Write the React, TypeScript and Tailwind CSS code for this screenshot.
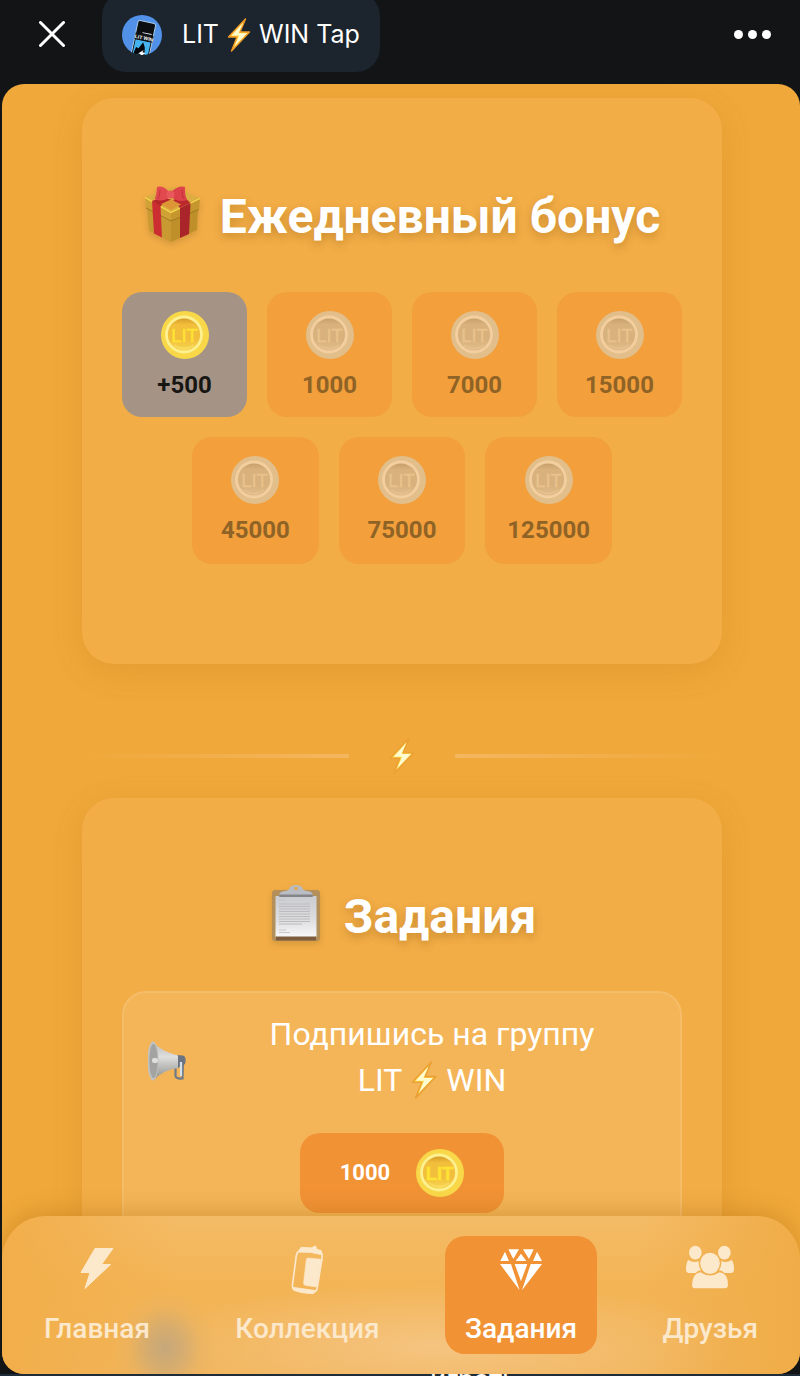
import type { ReactNode } from 'react';

type Day = { label: string; active?: boolean };

const firstRow: Day[] = [
  { label: '+500', active: true },
  { label: '1000' },
  { label: '7000' },
  { label: '15000' },
];
const secondRow: Day[] = [{ label: '45000' }, { label: '75000' }, { label: '125000' }];

function Coin({ faded = false }: { faded?: boolean }) {
  const id = faded ? 'coin-faded' : 'coin-gold';
  const c = faded
    ? { outer: '#e2be8b', ring: '#f3cf9f', top: '#c49c66', mid: '#d8b17d', low: '#e3bf8c', text: '#e9c28c' }
    : { outer: '#f8d848', ring: '#fdf090', top: '#cf9424', mid: '#f2bf3c', low: '#f9db55', text: '#ffe334' };
  return (
    <svg viewBox="0 0 48 48" className="size-12 shrink-0" aria-hidden="true">
      <defs>
        <linearGradient id={id} x1="0" y1="0" x2="0" y2="1">
          <stop offset="0" stopColor={c.top} />
          <stop offset="0.22" stopColor={c.mid} />
          <stop offset="0.65" stopColor={c.mid} />
          <stop offset="1" stopColor={c.low} />
        </linearGradient>
      </defs>
      <circle cx="24" cy="24" r="24" fill={c.outer} />
      <circle cx="23" cy="23.5" r="17.5" fill={`url(#${id})`} stroke={c.ring} strokeWidth="2.8" />
      <path d="M13 34 Q23 41 33 34" fill="none" stroke={c.ring} strokeWidth="1" opacity="0.5" />
      <text
        x="23.5"
        y="31"
        textAnchor="middle"
        fontSize="18.5"
        fill={c.text}
        stroke={c.text}
        strokeWidth="0.4"
        fontFamily="Liberation Sans, sans-serif"
      >
        LIT
      </text>
    </svg>
  );
}

function Bolt({ className, soft = false }: { className: string; soft?: boolean }) {
  return (
    <svg viewBox="0 0 24 34" className={className} aria-hidden="true">
      <path
        d="M18.5 1 L1.5 19 L10 19 L4.5 33 L22.5 14 L13 14 Z"
        fill="#ffd93f"
        stroke={soft ? '#eba136' : '#f09a26'}
        strokeWidth="1.4"
        strokeLinejoin="round"
      />
      <path d="M16 5 L4.500 17.600 L12 17.600 L7.500 28.500 L20 15.300 L11.500 15.300 Z" fill="#fffbd0" />
    </svg>
  );
}

function Gift() {
  return (
    <svg viewBox="1 0 60 60" className="size-15 shrink-0 drop-shadow-md" aria-hidden="true">
      <path d="M4 20 L28 32 V57 L6 46 Z" fill="#c99a31" />
      <path d="M28 32 L55 22 L54 45 L28 57 Z" fill="#bf9029" />
      <path d="M2 12 L31 2 L57 13.500 L28 28 Z" fill="#dcae42" />
      <path d="M2 12.500 L28 27 V36 L3 23 Z" fill="#d0a135" />
      <path d="M57 13.500 L28 27 V36 L56 24.500 Z" fill="#c4962d" />
      <path d="M3 23 L28 36 L56 24.500" fill="none" stroke="#94701f" strokeWidth="0.8" />
      <path d="M2 12.500 L28 27.500 L57 13.500" fill="none" stroke="#f6d84c" strokeWidth="1.3" />
      <path d="M9 16 L17.500 20.500 L19 52.500 L11 48.500 Z" fill="#cb2d31" />
      <path d="M37 23 L47.500 18 L46 49 L37 53 Z" fill="#aa2529" />
      <path d="M9 16 L20 12 L29 15 L17.500 21 Z" fill="#b52529" />
      <path d="M47.500 18 L40 11 L30 15 L37 23 Z" fill="#bb292d" />
      <path d="M18 19 L28 14.500 L38 19.500 L28 25 Z" fill="#dc9636" />
      <path d="M26 7 Q20 0 14 2 Q13.500 10 11.500 14 Q19 18 27 12 Z" fill="#e2494f" />
      <path d="M28 7 Q36 0 42 2 Q41.500 10 44 15 Q36 18 28 12 Z" fill="#dc4248" />
      <path d="M17 5 Q17 11 15 14 M39 5 Q39 11 41 14" stroke="#c23238" strokeWidth="1" fill="none" />
      <circle cx="27.500" cy="9.500" r="4" fill="#e9585c" />
    </svg>
  );
}

function Clipboard() {
  const lines = [20, 22.5, 25, 27.5, 30, 32.5, 35, 37.5, 40];
  return (
    <svg viewBox="2 1 60 60" className="size-15 shrink-0 drop-shadow-md" aria-hidden="true">
      <defs>
        <linearGradient id="paper" x1="0" y1="0" x2="0" y2="1">
          <stop offset="0" stopColor="#cbccd0" />
          <stop offset="0.6" stopColor="#dedee0" />
          <stop offset="1" stopColor="#f7f7f8" />
        </linearGradient>
      </defs>
      <rect x="6" y="6" width="48" height="51" rx="3" fill="#b48f58" />
      <rect x="10" y="52" width="40" height="4.500" fill="#7d5c3e" />
      <rect x="9.500" y="12" width="41" height="40.500" fill="url(#paper)" />
      {lines.map((y) => (
        <path key={y} d={`M13 ${y} H${y === 40 ? 36 : 44}`} stroke="#bcbcbf" strokeWidth="1" />
      ))}
      <path d="M13 16 H19 M13 46 H20 M13 48.500 H24" stroke="#c0c0c2" strokeWidth="0.8" />
      <path d="M13 12 Q13 7 20 7 L23 5.500 Q24 1 30 1 Q36 1 37 5.500 L40 7 Q47 7 47 12 Z" fill="#b9bdc3" />
      <rect x="13" y="10.500" width="34" height="2.500" rx="1" fill="#858589" />
      <circle cx="30" cy="4.500" r="1.800" fill="#e2a94c" />
    </svg>
  );
}

function Megaphone() {
  return (
    <svg viewBox="1 0 40 42" className="mt-2 h-[42px] w-10 shrink-0" aria-hidden="true">
      <defs>
        <linearGradient id="horn" x1="0" y1="0" x2="0" y2="1">
          <stop offset="0" stopColor="#b9b9b7" />
          <stop offset="0.4" stopColor="#dededc" />
          <stop offset="1" stopColor="#8d8d8b" />
        </linearGradient>
      </defs>
      <path d="M28.500 27 V36 Q29 39 35.500 38.500 L36 20" fill="none" stroke="#6f7b88" strokeWidth="2.200" />
      <path d="M30 15 L36 15.500 Q40 17 38 24 L31 28 Z" fill="#6b7480" />
      <path d="M6 1.500 Q13 11 31 15.500 V28 Q16 30 7 40 Z" fill="url(#horn)" />
      <ellipse cx="6" cy="21" rx="5.500" ry="19.500" fill="#c2c2c0" />
      <ellipse cx="6.500" cy="21" rx="4.200" ry="17" fill="#a3a3a1" />
      <rect x="5" y="18" width="6" height="5" rx="2" fill="#dededc" />
      <path d="M34 22 V36" stroke="#d5e0ea" strokeWidth="2.200" />
    </svg>
  );
}

function Avatar() {
  return (
    <svg viewBox="0 0 120 120" className="size-10 shrink-0 rounded-full" aria-hidden="true">
      <rect width="120" height="120" fill="#5191e8" />
      <g transform="rotate(12 65 70)">
        <rect x="38" y="20" width="54" height="120" rx="6" fill="#0b0d10" stroke="#a9c8e2" strokeWidth="3" />
        <rect x="42" y="78" width="46" height="60" fill="#45b4ee" />
        <path d="M42 132 L48 100 L56 102 L66 82 L74 96 L80 132 Z" fill="#05070a" />
        <path d="M38 58 H93 V77 H38 Z" fill="#101317" />
        <text x="66" y="74" textAnchor="middle" fontSize="15" fontWeight="700" fill="#fff" fontFamily="Liberation Sans, sans-serif">
          LIT WIN
        </text>
        <path d="M58 54 H86" stroke="#dfe8ef" strokeWidth="3" />
        <path d="M72 104 L58 118 H66 L62 130 L80 112 H70 Z" fill="#fff" />
      </g>
    </svg>
  );
}

function DayTile({ day }: { day: Day }) {
  return (
    <button
      type="button"
      disabled={!day.active}
      className={`flex aspect-square flex-col items-center rounded-[20px] pt-[19px] ${
        day.active ? 'bg-[#a59485] text-[#171613]' : 'bg-[#f29f3c] text-[#8f6326]'
      }`}
    >
      <Coin faded={!day.active} />
      <span className="mt-2.5 text-2xl leading-8 font-bold">{day.label}</span>
    </button>
  );
}

function Card({ icon, title, children }: { icon: ReactNode; title: string; children: ReactNode }) {
  return (
    <section className="rounded-[32px] bg-[#f2ad46] px-10 pt-20 pb-[100px] shadow-[0_8px_32px_rgba(160,95,0,0.16)]">
      <h2 className="flex h-[74px] items-center justify-center gap-4 text-5xl font-bold whitespace-nowrap text-white">
        {icon}
        <span className="pt-1 [text-shadow:0_4px_8px_rgba(120,70,0,0.3)]">{title}</span>
      </h2>
      {children}
    </section>
  );
}

function NavItem({ label, active = false, children }: { label: string; active?: boolean; children: ReactNode }) {
  return (
    <a
      href="#"
      aria-current={active ? 'page' : undefined}
      className={`flex h-[118px] flex-col items-center rounded-[20px] px-5 pt-2 ${
        active ? 'bg-[#f19235] text-white' : 'text-[#fce8cb]'
      }`}
    >
      {children}
      <span className="mt-[21px] text-[28px] leading-8 font-medium">{label}</span>
    </a>
  );
}

export default function App() {
  return (
    <div className="flex h-screen flex-col overflow-hidden bg-[#131416] font-[Roboto,'Open_Sans',sans-serif]">
      <header className="flex h-[84px] shrink-0 items-start pr-7 pl-8">
        <button type="button" aria-label="Закрыть" className="mt-3.5 flex size-10 items-center justify-center">
          <svg viewBox="0 0 26 26" className="size-[26px]" fill="none" stroke="#fff" strokeWidth="3" strokeLinecap="round">
            <path d="M1.500 1.500 L24.500 24.500 M24.500 1.500 L1.500 24.500" />
          </svg>
        </button>
        <div className="-mt-2 ml-[30px] flex h-20 items-center gap-5 rounded-[24px] bg-[#1c242d] px-5 pt-1.5 font-[Inter,sans-serif] text-[25px] text-white">
          <Avatar />
          <span className="flex items-center gap-2 whitespace-nowrap">
            LIT
            <Bolt className="h-[34px] w-6" />
            WIN Tap
          </span>
        </div>
        <button type="button" aria-label="Меню" className="mt-3.5 ml-auto flex h-10 items-center gap-[5px] px-px">
          <span className="size-[9px] rounded-full bg-white" />
          <span className="size-[9px] rounded-full bg-white" />
          <span className="size-[9px] rounded-full bg-white" />
        </button>
      </header>

      <div className="relative ml-0.5 min-h-0 flex-1 overflow-hidden rounded-[22px] bg-[#f0a83a]">
        <main className="h-full overflow-hidden pt-3.5 pr-[78px] pl-20">
          <Card icon={<Gift />} title="Ежедневный бонус">
            <div className="mt-10 grid grid-cols-4 gap-5">
              {firstRow.map((d) => (
                <DayTile key={d.label} day={d} />
              ))}
            </div>
            <div className="mx-auto mt-5 grid w-3/4 grid-cols-3 gap-5">
              {secondRow.map((d) => (
                <DayTile key={d.label} day={d} />
              ))}
            </div>
          </Card>

          <div className="flex h-[134px] items-center pt-[50px]">
            <div className="h-1 flex-1 bg-linear-to-r from-transparent to-[#f4b65f]" />
            <div className="flex w-[106px] justify-center">
              <Bolt className="h-[38px] w-7" soft />
            </div>
            <div className="h-1 flex-1 bg-linear-to-l from-transparent to-[#f4b65f]" />
          </div>

          <Card icon={<Clipboard />} title="Задания">
            <article className="mt-[39px] rounded-[24px] border-2 border-[#f5bc69] bg-[#f4b558] px-6 pt-[18px] pb-6">
              <div className="flex items-center gap-5 text-white">
                <Megaphone />
                <p className="flex-1 text-center text-[32px] leading-[46px]">
                  Подпишись на группу
                  <span className="flex items-center justify-center gap-2">
                    LIT
                    <Bolt className="h-[38px] w-7" soft />
                    WIN
                  </span>
                </p>
              </div>
              <button
                type="button"
                className="mx-auto mt-[30px] flex h-20 items-center gap-[26px] rounded-[20px] bg-[#f19235] px-10 text-[22px] font-bold text-white"
              >
                1000
                <Coin />
              </button>
            </article>
          </Card>
        </main>

        <nav className="absolute inset-x-0 bottom-0 flex h-[158px] items-center justify-between overflow-hidden rounded-t-[44px] bg-[radial-gradient(ellipse_52px_58px_at_163px_132px,rgba(196,166,124,0.95),rgba(202,169,120,0.7)_35%,rgba(220,175,110,0.25)_70%,rgba(240,180,90,0)_100%),radial-gradient(ellipse_290px_64px_at_440px_130px,rgba(246,200,138,0.8),rgba(246,200,138,0)_100%),linear-gradient(to_right,#f2ae4a,rgba(242,174,74,0)_22%,rgba(242,174,74,0)_80%,#f0ac47),linear-gradient(#f4bb66,#f3b455_45%,#f1b55c)] px-[22px] shadow-[0_-6px_20px_rgba(150,90,0,0.25)]">
          <NavItem label="Главная">
            <svg viewBox="0 0 48 48" className="size-12" fill="currentColor">
              <path
                d="M22 4.500 H40 L28.500 20.500 H37.500 L12 44.500 L17 28.500 H8 Z"
                stroke="currentColor"
                strokeWidth="1"
                strokeLinejoin="round"
              />
            </svg>
          </NavItem>
          <NavItem label="Коллекция">
            <svg
              viewBox="848 132 144 144"
              className="size-12 overflow-visible"
              fill="none"
              stroke="currentColor"
              strokeLinejoin="round"
            >
              <path d="M902 142 L932 144 L946 138 L949 148 L963 152 L965 164 L930 157 L893 156 Z" fill="currentColor" strokeWidth="3" />
              <path d="M893 154 L888 166 L876 258 L880 268 M965 160 L965 176 L950 268 L944 276" strokeWidth="5" />
              <path d="M876 262 L948 272 L938 281 L905 278 L880 271 Z" fill="currentColor" strokeWidth="3" />
              <path d="M922 174 L963 178 L949 261 L914 256 Q909 254 910 248 L918 178 Z" fill="currentColor" strokeWidth="2" />
            </svg>
          </NavItem>
          <NavItem label="Задания" active>
            <svg viewBox="291 132 144 144" className="size-12" fill="currentColor">
              <path d="M315 155 L301 183 H327 Z M325 148 H357 L340 177 Z M363 161 L347 183 H379 Z M369 148 H401 L387 177 Z M411 155 L399 183 H426 Z M300 192 H333 L359 271 Z M344 192 H382 L363 244 Z M392 192 H426 L366 271 Z" />
            </svg>
          </NavItem>
          <NavItem label="Друзья">
            <svg viewBox="861 132 144 144" className="size-12" fill="currentColor">
              <ellipse cx="889" cy="158" rx="19" ry="20.500" />
              <ellipse cx="976" cy="158" rx="19" ry="20.500" />
              <path d="M868 180 Q884 190 899 183 Q898 199 906 211 Q896 212 890 219 H870 Q862 219 861 210 Q861 188 868 180 Z" />
              <path d="M998 180 Q982 190 967 183 Q968 199 960 211 Q970 212 976 219 H996 Q1004 219 1005 210 Q1005 188 998 180 Z" />
              <ellipse cx="933" cy="190" rx="29.500" ry="32" />
              <path d="M904 217 Q933 236 962 217 Q988 220 987 256 Q986 266 976 265 H890 Q880 266 879 256 Q880 220 904 217 Z" />
            </svg>
          </NavItem>
        </nav>
      </div>
      <div className="h-0.5 shrink-0 overflow-hidden bg-[#1f2d3a] pl-[430px] text-[28px] text-white">
        <p className="-mt-2 leading-7">играть</p>
      </div>
    </div>
  );
}
